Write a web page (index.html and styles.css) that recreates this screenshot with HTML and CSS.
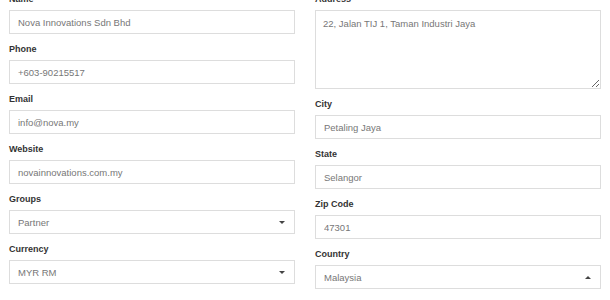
FILE: index.html
```html
<!DOCTYPE html>
<html lang="en">
<head>
    <meta charset="UTF-8">
    <meta name="viewport" content="width=device-width, initial-scale=1.0">
    <title>Customer details</title>
    <link rel="stylesheet" href="styles.css">
</head>
<body>

    <form class="customer-form">
        <div class="column">
            <div class="field">
                <label for="name">Name</label>
                <input type="text" id="name" value="Nova Innovations Sdn Bhd">
            </div>
            <div class="field">
                <label for="phone">Phone</label>
                <input type="text" id="phone" value="+603-90215517">
            </div>
            <div class="field">
                <label for="email">Email</label>
                <input type="text" id="email" value="info@nova.my">
            </div>
            <div class="field">
                <label for="website">Website</label>
                <input type="text" id="website" value="novainnovations.com.my">
            </div>
            <div class="field">
                <label for="groups">Groups</label>
                <div class="select">
                    <span>Partner</span>
                    <span class="caret"></span>
                </div>
            </div>
            <div class="field">
                <label for="currency">Currency</label>
                <div class="select">
                    <span>MYR RM</span>
                    <span class="caret"></span>
                </div>
            </div>
        </div>

        <div class="column">
            <div class="field">
                <label for="address">Address</label>
                <textarea id="address">22, Jalan TIJ 1, Taman Industri Jaya</textarea>
            </div>
            <div class="field">
                <label for="city">City</label>
                <input type="text" id="city" value="Petaling Jaya">
            </div>
            <div class="field">
                <label for="state">State</label>
                <input type="text" id="state" value="Selangor">
            </div>
            <div class="field">
                <label for="zip">Zip Code</label>
                <input type="text" id="zip" value="47301">
            </div>
            <div class="field">
                <label for="country">Country</label>
                <div class="select">
                    <span>Malaysia</span>
                    <span class="caret up"></span>
                </div>
            </div>
        </div>
    </form>

</body>
</html>
```

FILE: styles.css
```css
body {
    font-family: "Liberation Sans", Arial, sans-serif;
    margin: 0;
    padding: 0 9px;
    background-color: #fff;
    overflow: hidden;
}
.customer-form {
    display: grid;
    grid-template-columns: 1fr 1fr;
    column-gap: 20px;
    margin-top: -8px;
}
.field {
    display: flex;
    flex-direction: column;
    margin-bottom: 8px;
}
.field label {
    font-size: 9px;
    font-weight: bold;
    color: #333;
    line-height: 14px;
    margin-bottom: 4px;
}
.field input, .field textarea, .select {
    box-sizing: border-box;
    width: 100%;
    height: 24px;
    margin: 0;
    padding: 0 8px;
    border: 1px solid #ddd;
    border-radius: 0;
    background-color: #fff;
    font-family: inherit;
    font-size: 9.5px;
    color: #777;
    outline: none;
}
.field textarea {
    height: 79px;
    padding: 6px 7px;
    line-height: 14px;
    resize: vertical;
}
.select {
    display: flex;
    justify-content: space-between;
    align-items: center;
}
.caret {
    width: 0;
    height: 0;
    margin-right: 1px;
    border-left: 3.5px solid transparent;
    border-right: 3.5px solid transparent;
    border-top: 3.5px solid #444;
}
.caret.up {
    border-top: 0;
    border-bottom: 3.5px solid #444;
}
```
